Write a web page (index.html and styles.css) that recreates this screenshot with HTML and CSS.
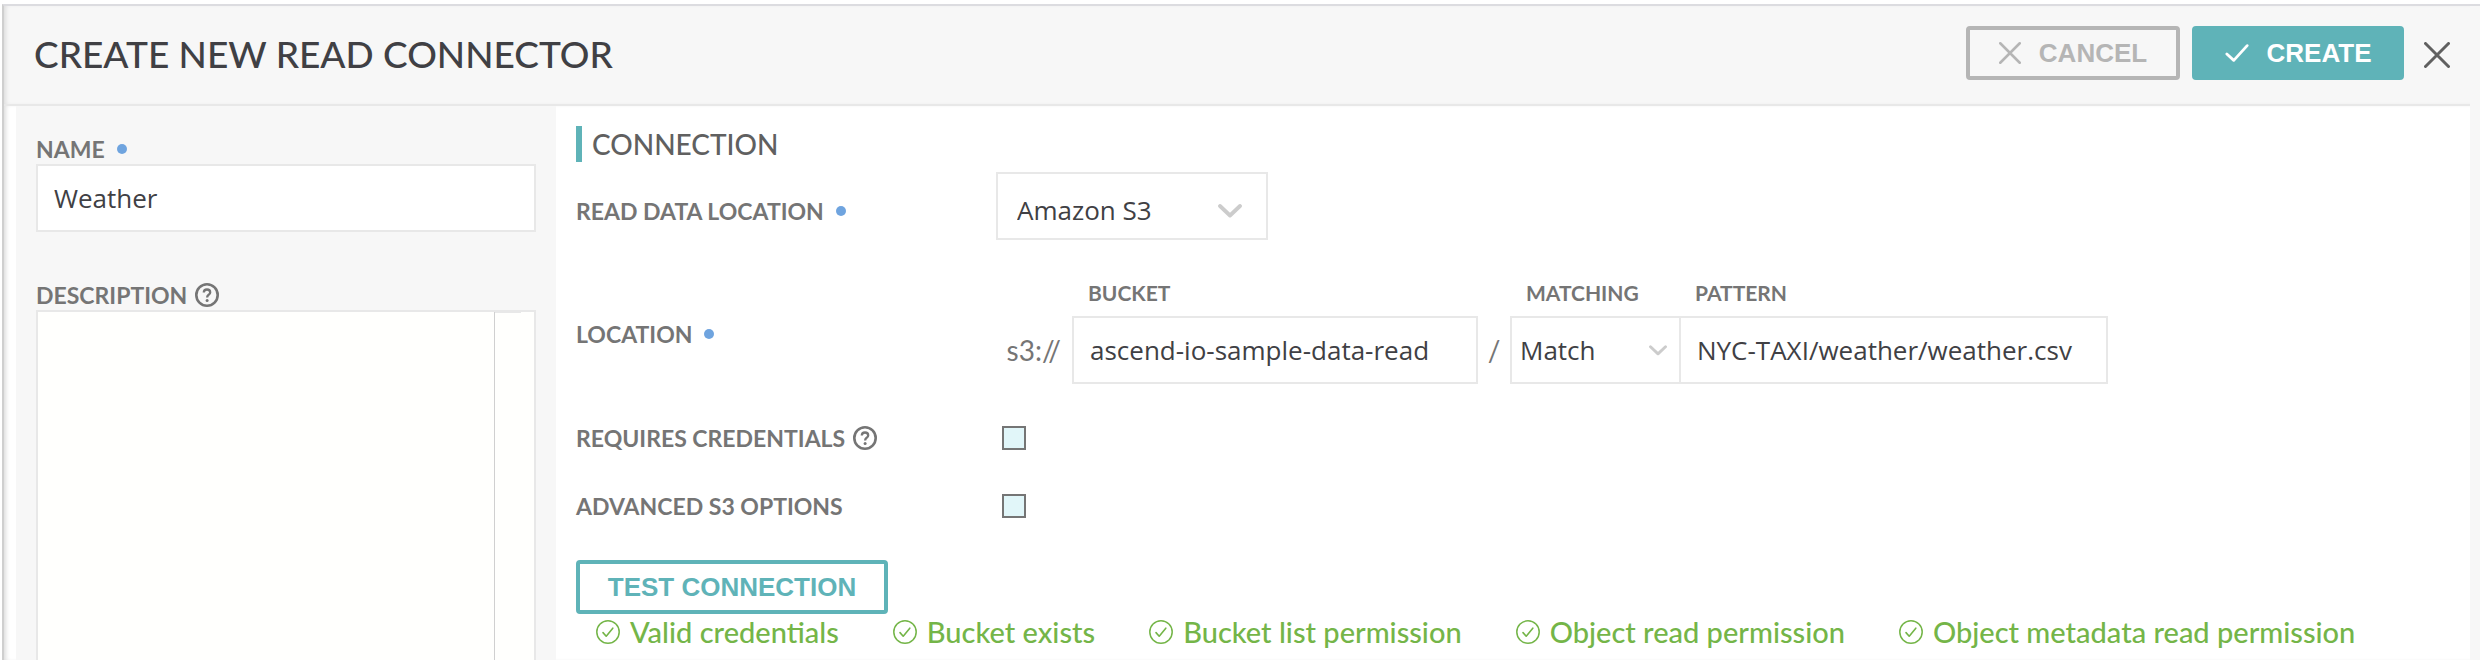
FILE: index.html
```html
<!DOCTYPE html>
<html lang="en">
<head>
<meta charset="utf-8">
<title>Create New Read Connector</title>
<link rel="stylesheet" href="styles.css">
</head>
<body>
<svg class="sprite" aria-hidden="true">
  <symbol id="help" viewBox="0 0 24 24"><circle cx="12" cy="12" r="10.7" fill="none" stroke="currentColor" stroke-width="2.6"/><path d="M8.8 9.6C8.8 7.7 10 6.5 12 6.5s3.2 1.2 3.2 2.9c0 2.2-3.1 2.5-3.1 5.1" fill="none" stroke="currentColor" stroke-width="2.3"/><circle cx="12.1" cy="17.5" r="1.5" fill="currentColor"/></symbol>
  <symbol id="ok" viewBox="0 0 24 24"><circle cx="12" cy="12" r="11.2" fill="none" stroke="currentColor" stroke-width="1.5"/><path d="M7 12.6l3.2 3.6 6.6-8" fill="none" stroke="currentColor" stroke-width="1.6" stroke-linecap="round" stroke-linejoin="round"/></symbol>
  <symbol id="cross" viewBox="0 0 26 26"><path d="M1.5 1.5l23 23M24.5 1.5l-23 23" fill="none" stroke="currentColor" stroke-width="3" stroke-linecap="round"/></symbol>
  <symbol id="check" viewBox="0 0 26 20"><path d="M2 11l7.5 7L24 2" fill="none" stroke="currentColor" stroke-width="3" stroke-linecap="round" stroke-linejoin="round"/></symbol>
  <symbol id="chevron" viewBox="0 0 24 14"><path d="M2 2l10 9.5L22 2" fill="none" stroke="currentColor" stroke-width="3.8" stroke-linecap="round" stroke-linejoin="round"/></symbol>
</svg>
<div class="panel">
  <header class="header">
    <h1 class="title">CREATE NEW READ CONNECTOR</h1>
    <button class="btn btn-cancel" type="button"><svg class="icon-cross"><use href="#cross"/></svg>CANCEL</button>
    <button class="btn btn-create" type="button"><svg class="icon-check"><use href="#check"/></svg>CREATE</button>
    <button class="close" type="button" aria-label="Close"><svg class="icon-close"><use href="#cross"/></svg></button>
  </header>
  <div class="content">
    <aside class="sidebar">
      <label class="label required" for="name">NAME</label>
      <input class="field" id="name" type="text" value="Weather">
      <label class="label label-next" for="description">DESCRIPTION<svg class="icon-help"><use href="#help"/></svg></label>
      <div class="editor">
        <textarea class="editor-text" id="description"></textarea>
        <div class="editor-gutter"></div>
      </div>
    </aside>
    <main class="main">
      <h2 class="section">CONNECTION</h2>
      <div class="row">
        <label class="label label-source required" for="source">READ DATA LOCATION</label>
        <div class="select select-source">
          <select class="field" id="source"><option>Amazon S3</option></select>
          <svg class="chevron"><use href="#chevron"/></svg>
        </div>
      </div>
      <div class="row row-location">
        <span class="label label-location required">LOCATION</span>
        <div class="location">
          <label class="caption caption-bucket" for="bucket">BUCKET</label>
          <label class="caption caption-matching" for="matching">MATCHING</label>
          <label class="caption" for="pattern">PATTERN</label>
          <span class="affix affix-scheme">s3://</span>
          <input class="field" id="bucket" type="text" value="ascend-io-sample-data-read">
          <span class="affix affix-slash">/</span>
          <div class="select select-match">
            <select class="field" id="matching"><option>Match</option></select>
            <svg class="chevron"><use href="#chevron"/></svg>
          </div>
          <input class="field" id="pattern" type="text" value="NYC-TAXI/weather/weather.csv">
        </div>
      </div>
      <div class="checks">
        <div class="row row-check">
          <label class="label" for="credentials">REQUIRES CREDENTIALS<svg class="icon-help"><use href="#help"/></svg></label>
          <input class="checkbox" id="credentials" type="checkbox">
        </div>
        <div class="row row-check">
          <label class="label" for="advanced">ADVANCED S3 OPTIONS</label>
          <input class="checkbox" id="advanced" type="checkbox">
        </div>
      </div>
      <button class="btn btn-test" type="button">TEST CONNECTION</button>
      <ul class="results">
        <li class="result"><svg class="icon-ok"><use href="#ok"/></svg>Valid credentials</li>
        <li class="result"><svg class="icon-ok"><use href="#ok"/></svg>Bucket exists</li>
        <li class="result"><svg class="icon-ok"><use href="#ok"/></svg>Bucket list permission</li>
        <li class="result"><svg class="icon-ok"><use href="#ok"/></svg>Object read permission</li>
        <li class="result"><svg class="icon-ok"><use href="#ok"/></svg>Object metadata read permission</li>
      </ul>
    </main>
  </div>
</div>
</body>
</html>
```
FILE: styles.css
```css
* { box-sizing: border-box; }
html, body { height: 100%; }
body {
  display: flex;
  margin: 0;
  padding-top: 4px;
  background: #fff;
  color: #404044;
  font-family: Lato, "Open Sans", sans-serif;
}
h1, h2, ul { margin: 0; padding: 0; font-weight: 500; }
button, input, select, textarea { margin: 0; color: inherit; font: inherit; }
svg { display: block; flex: none; }
.sprite { position: absolute; width: 0; height: 0; }

.panel {
  display: flex;
  flex-direction: column;
  flex: 1;
  min-width: 0;
  margin-left: 2px;
  padding-right: 10px;
  border-top: 2px solid #dcdce0;
  border-left: 2px solid #cfcfcf;
  background: #f7f7f7;
}
.header {
  display: flex;
  align-items: center;
  padding: 20px 20px 24px 30px;
  border-bottom: 2px solid #e8e8e8;
  box-shadow: inset 4px 0 4px -2px #ddd;
}
.title { flex: 1; padding-top: 2px; font-size: 37px; line-height: 50px; }

.btn {
  display: flex;
  align-items: center;
  justify-content: center;
  gap: 18px;
  height: 54px;
  padding: 0 30px;
  border: 4px solid;
  border-radius: 4px;
  background: none;
  font: bold 26px/30px "Liberation Sans", Arial, sans-serif;
}
.btn-cancel { width: 214px; color: #b5b5b5; }
.btn-create { width: 212px; margin-left: 12px; border-color: #5fb3b8; background: #5fb3b8; color: #fff; }
.btn-test { width: 312px; margin-top: 20px; padding: 0; color: #5fb3b8; }
.close { margin-left: 20px; padding: 4px 0 0; border: 0; background: none; color: #606060; }
.icon-cross { width: 22px; height: 22px; }
.icon-check { width: 24px; height: 20px; }
.icon-close { width: 26px; height: 26px; }

.content {
  display: grid;
  grid-template-columns: 540px minmax(0, 1fr);
  flex: 1;
  padding-left: 12px;
  background: #fff;
  box-shadow: inset 4px 0 4px -2px #ddd;
}
.sidebar {
  display: flex;
  flex-direction: column;
  padding: 30px 20px 0;
  background: #f7f7f7;
}
.label {
  display: flex;
  align-items: center;
  color: #757575;
  font-size: 23px;
  font-weight: 700;
  line-height: 26px;
}
.sidebar .label { padding-bottom: 2px; }
.label-next { margin-top: 50px; }
.label-source { padding-top: 10px; }
.label-location { padding-top: 4px; }
.required::after {
  content: "";
  width: 10px;
  height: 10px;
  margin-left: 12px;
  border-radius: 50%;
  background: #6fa4df;
}
.icon-help { width: 24px; height: 24px; margin-left: 8px; }

.field {
  width: 100%;
  height: 68px;
  padding: 0 16px;
  border: 2px solid #e8e8e8;
  border-radius: 0;
  outline: 0;
  background: #fff;
  font-family: "Open Sans", sans-serif;
  font-size: 26px;
}
.editor { display: flex; flex: 1; border: 2px solid #e8e8e8; border-bottom: 0; background: #fffffd; }
.editor-text {
  flex: 1;
  min-width: 0;
  padding: 16px;
  border: 0;
  border-right: 1px solid #d0d0d0;
  outline: 0;
  background: none;
  font-size: 26px;
  resize: none;
}
.editor-gutter { width: 39px; padding-right: 13px; }
.editor-gutter::before { content: ""; display: block; border-top: 1px solid #e8e8e8; }

.main { padding: 20px 20px 0; }
.section {
  padding-left: 10px;
  border-left: 6px solid #5fb3b8;
  color: #606060;
  font-size: 28px;
  line-height: 36px;
}
.row {
  display: grid;
  grid-template-columns: 420px minmax(0, 1fr);
  align-items: center;
  margin-top: 10px;
}
.row-location { margin-top: 40px; }
.select { position: relative; }
.select .field { appearance: none; }
.chevron { position: absolute; color: #ccc; pointer-events: none; }
.select-source { width: 272px; }
.select-source .field { padding: 8px 19px 0; }
.select-source .chevron { top: 32px; right: 26px; width: 24px; height: 14px; }
.select-match .field { padding: 0 8px; }
.select-match .chevron { top: 29px; right: 14px; width: 18px; height: 11px; }

.location {
  display: grid;
  grid-template-columns: 76px minmax(0, 406px) 32px minmax(0, 169px) minmax(0, 429px);
  align-items: center;
  row-gap: 10px;
}
.caption { padding-left: 16px; color: #757575; font-size: 21px; font-weight: 700; line-height: 26px; }
.caption-bucket { grid-column: 2; }
.caption-matching { grid-column: 4; }
.affix { color: #757575; font-size: 28px; line-height: 36px; }
.affix-scheme { padding-right: 11px; text-align: right; }
.affix-slash { text-align: center; }
.select-match { margin-right: -2px; }

.checks { margin-top: 20px; }
.row-check { height: 68px; margin-top: 0; }
.checkbox {
  width: 24px;
  height: 24px;
  margin-left: 6px;
  appearance: none;
  border: 2px solid #757575;
  background: #e1f6f9;
}
.results {
  display: flex;
  flex-wrap: wrap;
  gap: 0 54px;
  padding-left: 20px;
  color: #74b548;
  font-size: 29px;
  line-height: 36px;
  list-style: none;
}
.result { display: flex; align-items: center; gap: 10px; }
.icon-ok { width: 24px; height: 24px; }
```
